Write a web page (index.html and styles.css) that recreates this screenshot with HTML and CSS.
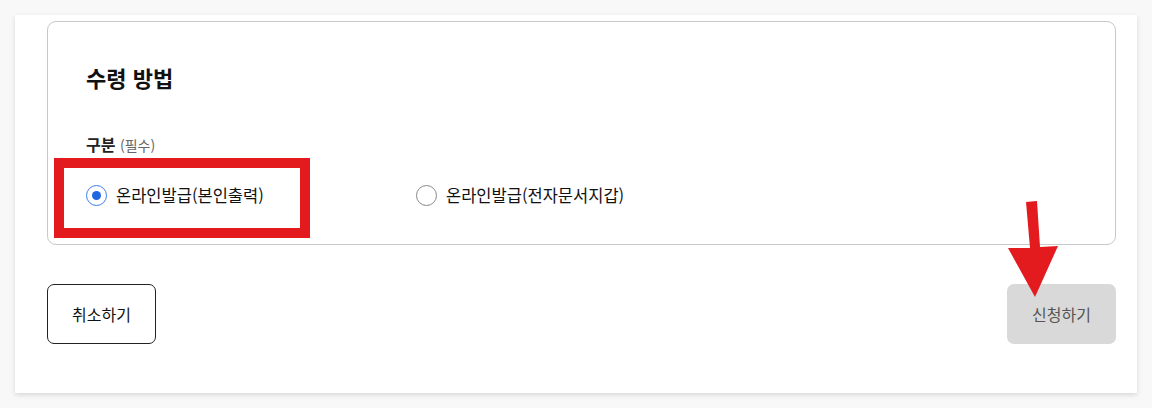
FILE: index.html
```html
<!DOCTYPE html>
<html lang="ko">
<head>
<meta charset="utf-8">
<title>수령 방법</title>
<link rel="stylesheet" href="styles.css">
</head>
<body>
<div class="page">
  <div class="card">
    <section class="box">
      <h2 class="title">수령 방법</h2>
      <div class="field-label">구분 <span class="req">(필수)</span></div>
      <div class="radios">
        <label class="option">
          <span class="radio checked"></span>
          <span class="opt-text">온라인발급(본인출력)</span>
        </label>
        <label class="option">
          <span class="radio"></span>
          <span class="opt-text">온라인발급(전자문서지갑)</span>
        </label>
      </div>
    </section>
    <div class="actions">
      <button class="btn btn-cancel" type="button">취소하기</button>
      <button class="btn btn-apply" type="button">신청하기</button>
    </div>
  </div>
  <div class="mark-box"></div>
  <svg class="mark-arrow" width="65" height="110" viewBox="0 0 65 110">
    <polygon points="26,7 37,6 40,52 58,51 35,102 8,53 30,53" fill="#e41b1e"/>
  </svg>
</div>
</body>
</html>
```

FILE: styles.css
```css
* { box-sizing: border-box; }
html, body { margin: 0; padding: 0; }
body {
  background: #f8f8f8;
  font-family: "Noto Sans CJK KR", "Noto Sans", sans-serif;
  color: #111;
}
.page {
  position: relative;
  width: 1152px;
  height: 408px;
  padding-top: 15px;
  overflow: hidden;
}
.card {
  margin-left: 15px;
  width: 1122px;
  height: 378px;
  background: #fff;
  box-shadow: 0 2px 5px rgba(0,0,0,0.13);
  padding: 6px 21px 0 32px;
}
.box {
  border: 1px solid #c8c8c8;
  border-radius: 9px;
  height: 224px;
  padding: 41px 38px 0 38px;
}
.title {
  margin: 0;
  font-size: 22px;
  line-height: 28px;
  font-weight: 700;
  color: #111;
}
.field-label {
  margin-top: 42px;
  font-size: 16px;
  line-height: 22px;
  font-weight: 700;
  color: #222;
}
.req {
  font-size: 14px;
  font-weight: 400;
  color: #666;
}
.radios {
  margin-top: 27px;
  display: flex;
}
.option {
  display: flex;
  align-items: center;
  gap: 9px;
  width: 330px;
  height: 24px;
}
.radio {
  width: 21px;
  height: 21px;
  border-radius: 50%;
  border: 1.5px solid #888;
  display: flex;
  align-items: center;
  justify-content: center;
  flex: none;
}
.radio.checked {
  border-color: #3b7de8;
}
.radio.checked::after {
  content: "";
  width: 9px;
  height: 9px;
  border-radius: 50%;
  background: #1f66e0;
}
.opt-text {
  font-size: 16.5px;
  line-height: 24px;
  color: #111;
}
.actions {
  margin-top: 39px;
  display: flex;
  justify-content: space-between;
}
.btn {
  width: 109px;
  height: 60px;
  border-radius: 7px;
  font-family: inherit;
  font-size: 16px;
  padding: 0;
}
.btn-cancel {
  background: #fff;
  border: 1px solid #222;
  color: #111;
}
.btn-apply {
  background: #d9d9d9;
  border: none;
  color: #555;
}
.mark-box {
  position: absolute;
  left: 54px;
  top: 158px;
  width: 256px;
  height: 80px;
  border: 10px solid #e41b1e;
}
.mark-arrow {
  position: absolute;
  left: 1000px;
  top: 195px;
}
```
